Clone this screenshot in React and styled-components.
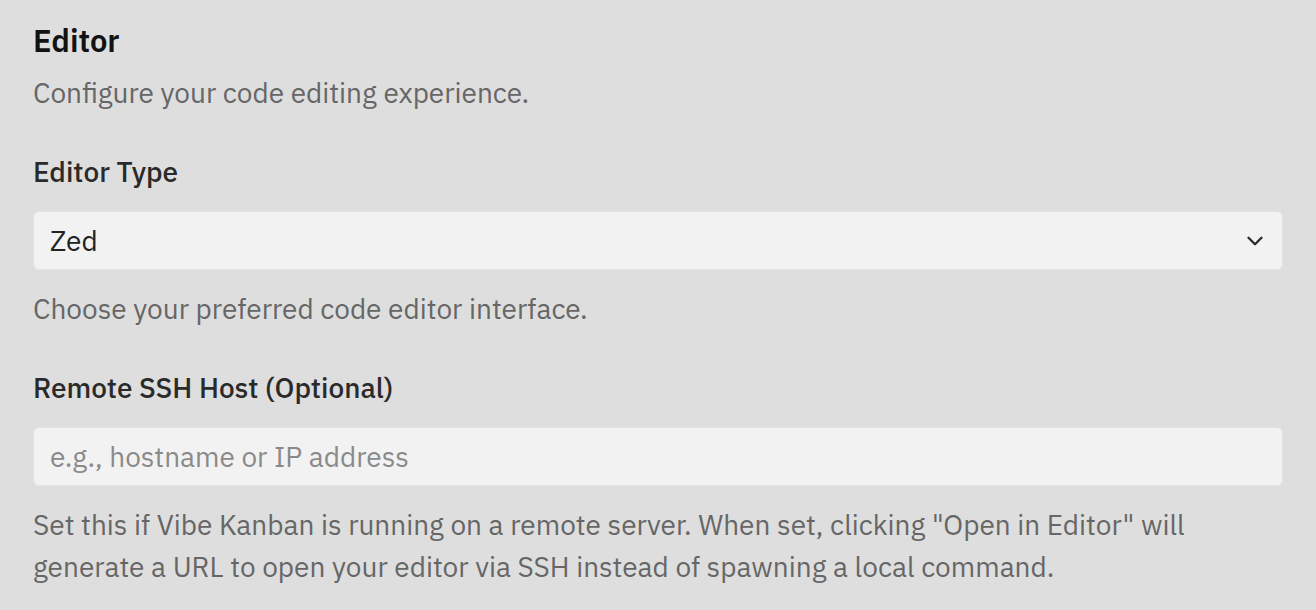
import React from 'react';
import styled, { createGlobalStyle } from 'styled-components';
import { ChevronDown } from 'lucide-react';

const GlobalStyle = createGlobalStyle`
  html, body {
    margin: 0;
    padding: 0;
    background: #dedede;
  }
  body {
    font-family: "IBM Plex Sans", Roboto, "Liberation Sans", sans-serif;
    -webkit-font-smoothing: antialiased;
  }
  * {
    box-sizing: border-box;
  }
`;

const Page = styled.div`
  width: 1316px;
  height: 610px;
  overflow: hidden;
  padding: 21px 33px 0 33px;
  display: flex;
  flex-direction: column;
  gap: 37px;
`;

const Header = styled.header`
  display: flex;
  flex-direction: column;
  gap: 11px;
`;

const Title = styled.h2`
  margin: 0;
  font-size: 31px;
  line-height: 40px;
  font-weight: 600;
  color: #121212;
`;

const Hint = styled.p`
  margin: 0;
  font-size: 28px;
  line-height: 42px;
  font-weight: 400;
  color: #666666;
`;

const Field = styled.div`
  display: flex;
  flex-direction: column;
  gap: ${(p) => p.$gap || 18}px;
`;

const Label = styled.label`
  font-size: 28px;
  line-height: 42px;
  font-weight: 500;
  color: #2a2a2a;
`;

const Box = styled.div`
  height: 59px;
  display: flex;
  align-items: center;
  justify-content: space-between;
  padding: 0 14px 0 16px;
  background: #f2f2f2;
  border: 1px solid #e4e4e4;
  border-radius: 6px;
  font-size: 28px;
  color: ${(p) => (p.$placeholder ? '#8a8a8a' : '#222222')};
`;

const ChevronWrap = styled.span`
  display: flex;
  color: #2b2b2b;
`;

function App() {
  return (
    <>
      <GlobalStyle />
      <Page>
        <Header>
          <Title>Editor</Title>
          <Hint>Configure your code editing experience.</Hint>
        </Header>

        <Field>
          <Label>Editor Type</Label>
          <Box>
            <span>Zed</span>
            <ChevronWrap>
              <ChevronDown size={26} strokeWidth={2.2} />
            </ChevronWrap>
          </Box>
          <Hint>Choose your preferred code editor interface.</Hint>
        </Field>

        <Field>
          <Label>Remote SSH Host (Optional)</Label>
          <Box $placeholder>e.g., hostname or IP address</Box>
          <Hint>
            Set this if Vibe Kanban is running on a remote server. When set, clicking "Open in Editor" will
            generate a URL to open your editor via SSH instead of spawning a local command.
          </Hint>
        </Field>
      </Page>
    </>
  );
}

export default App;
